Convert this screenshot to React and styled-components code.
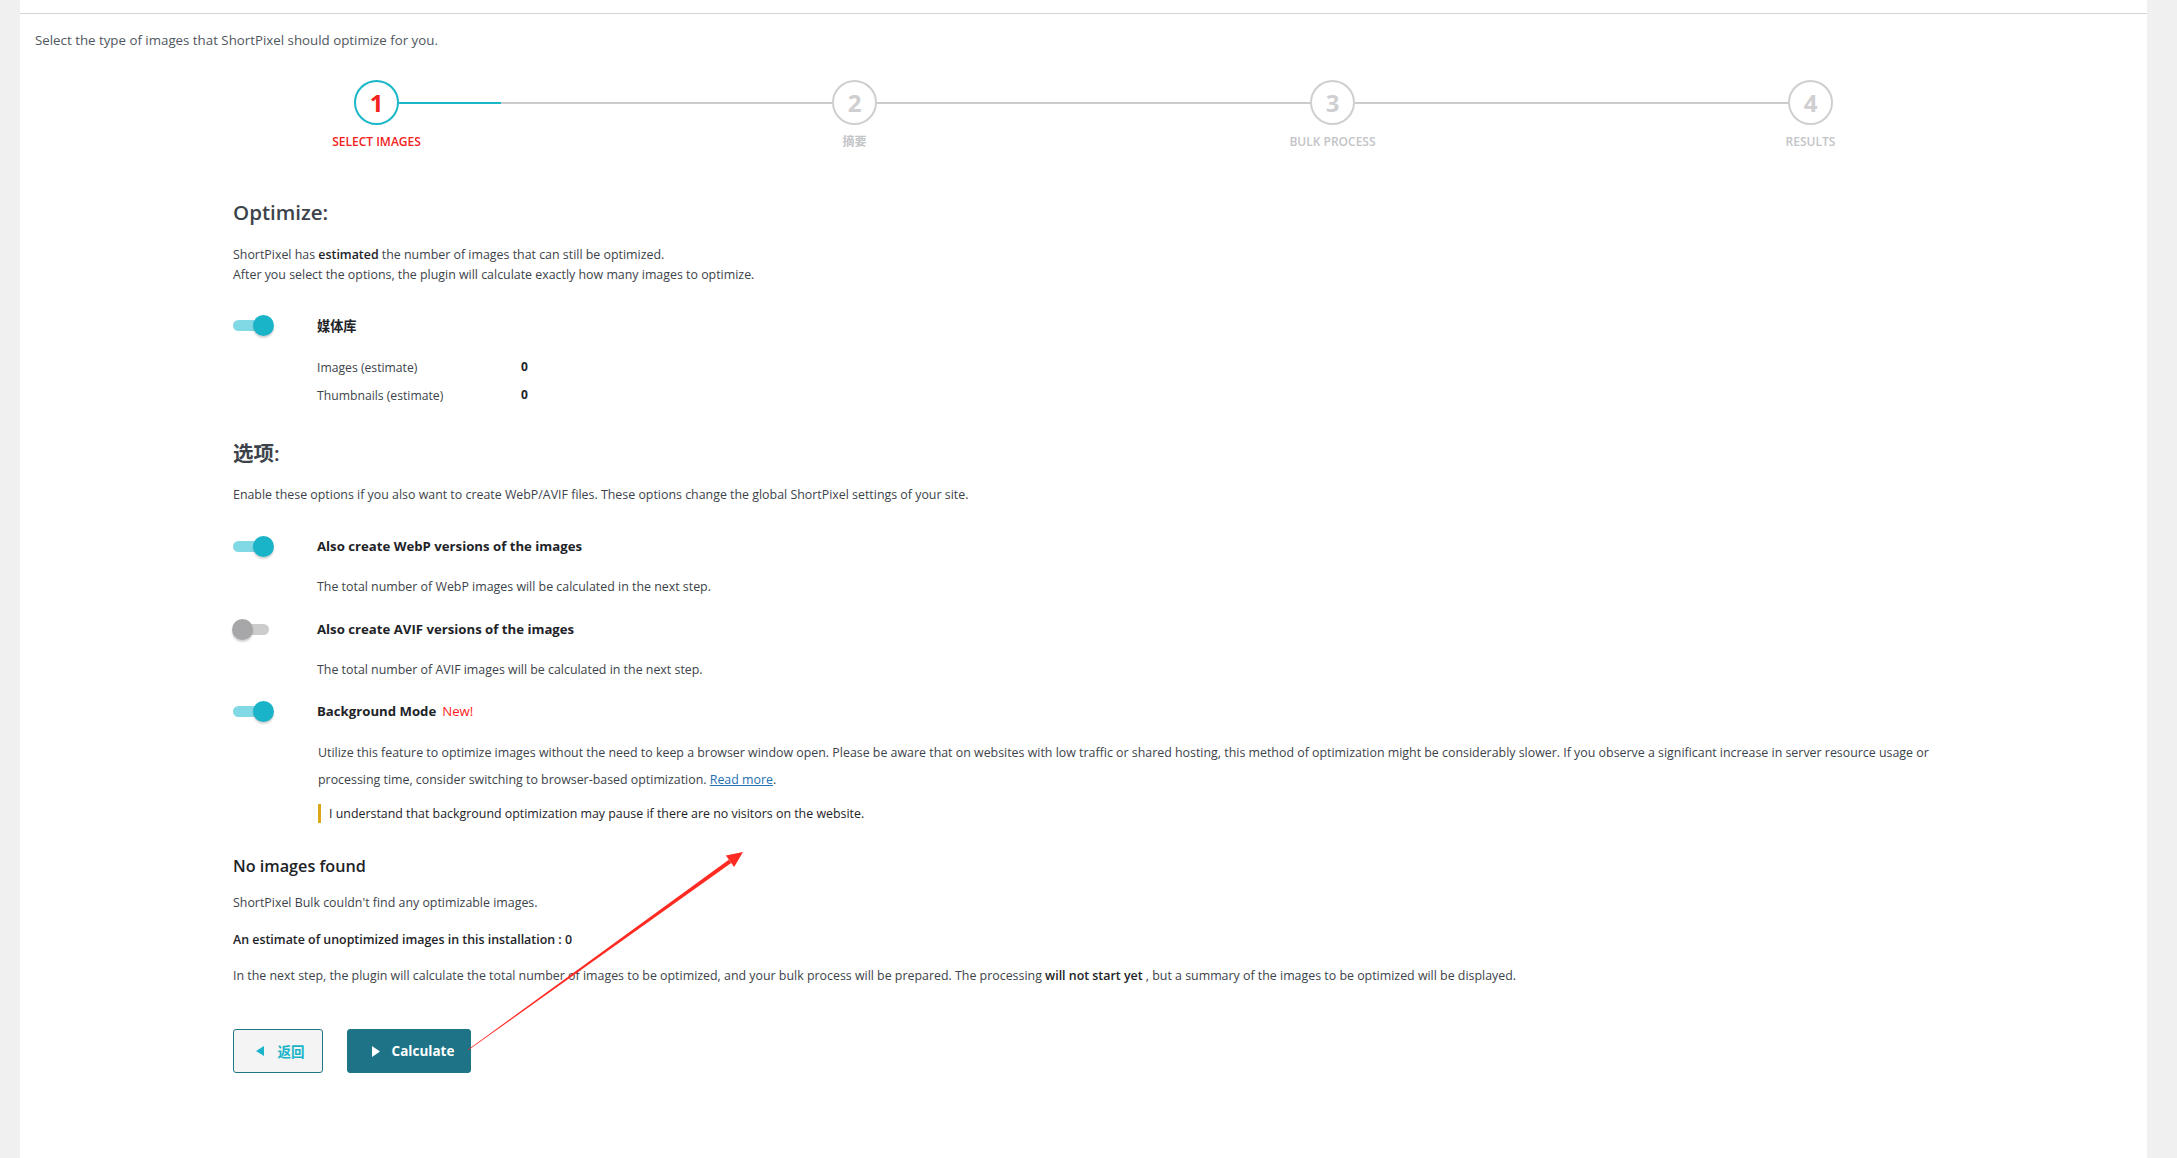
import React from 'react'
import styled, { createGlobalStyle } from 'styled-components'

const GlobalStyle = createGlobalStyle`
  html, body {
    margin: 0;
    padding: 0;
    background: #f0f0f1;
    overflow: hidden;
  }
  body {
    font-family: "Open Sans", "Noto Sans CJK SC", sans-serif;
    color: #3c434a;
  }
  * {
    box-sizing: border-box;
  }
`

const Page = styled.div`
  display: flex;
  padding: 0 30px 0 20px;
  min-height: 1158px;
`

const Panel = styled.div`
  position: relative;
  flex: 1;
  background: #ffffff;
`

const TopRule = styled.div`
  height: 14px;
  border-bottom: 1px solid #d4d4d6;
`

const Intro = styled.p`
  margin: 17px 0 0 15px;
  font-size: 13.3px;
  line-height: 18px;
  color: #50575e;
`

const Stepper = styled.div`
  display: flex;
  align-items: flex-start;
  width: 1479px;
  margin: 31px 0 0 334px;
`

const Step = styled.div`
  width: 45px;
  display: flex;
  flex-direction: column;
  align-items: center;
`

const Circle = styled.div`
  width: 45px;
  height: 45px;
  border-radius: 50%;
  border: 2px solid ${p => (p.$active ? '#1ab7c9' : '#cfcfd1')};
  display: flex;
  align-items: center;
  justify-content: center;
  font-size: 24px;
  font-weight: 700;
  color: ${p => (p.$active ? '#f2221c' : '#cfcfd1')};
`

const StepLabel = styled.div`
  margin-top: 10px;
  white-space: nowrap;
  font-size: 12px;
  line-height: 14px;
  font-weight: 600;
  text-transform: uppercase;
  color: ${p => (p.$active ? '#f2221c' : '#c3c4c7')};
`

const Connector = styled.div`
  flex: 1;
  height: 2px;
  margin-top: 22px;
  background: #cccccc;
  display: flex;
`

const ConnectorFill = styled.div`
  width: ${p => p.$width}px;
  background: #1ab7c9;
`

const Content = styled.div`
  width: 1720px;
  margin-left: 213px;
  display: flex;
  flex-direction: column;
`

const SectionTitle = styled.h2`
  margin: ${p => p.$top}px 0 0;
  font-size: 20.5px;
  line-height: 26px;
  font-weight: 600;
  color: #3c434a;
`

const Text = styled.p`
  margin: ${p => p.$top || 0}px 0 0 ${p => p.$indent || 0}px;
  font-size: 12.4px;
  line-height: ${p => p.$lh || 20}px;
  font-weight: ${p => (p.$strong ? 600 : 400)};
  color: ${p => (p.$strong ? '#1d2327' : '#3c434a')};

  & b {
    font-weight: 600;
    color: #1d2327;
  }
`

const Link = styled.a`
  color: #2271b1;
  text-decoration: underline;
`

const OptionRow = styled.div`
  display: flex;
  align-items: center;
  height: 22px;
  margin-top: ${p => p.$top}px;
`

const SwitchBox = styled.div`
  width: 84px;
  flex-shrink: 0;
`

const Switch = styled.div`
  position: relative;
  width: 41px;
  height: 21px;
`

const Track = styled.div`
  position: absolute;
  left: 0;
  top: 5px;
  width: 36px;
  height: 11px;
  border-radius: 6px;
  background: ${p => (p.$on ? '#80d9e5' : '#cccccc')};
`

const Knob = styled.div`
  position: absolute;
  top: 0;
  left: ${p => (p.$on ? '20px' : '-1px')};
  width: 21px;
  height: 21px;
  border-radius: 50%;
  background: ${p => (p.$on ? '#1ab4c9' : '#a7a7a9')};
  box-shadow: 0 2px 2px rgba(0, 0, 0, 0.18);
`

const OptionLabel = styled.span`
  font-size: 13.2px;
  font-weight: 700;
  color: #1d2327;
`

const NewTag = styled.span`
  margin-left: 6px;
  font-weight: 400;
  color: #ff1c1c;
`

const Counts = styled.div`
  display: grid;
  grid-template-columns: 204px auto;
  grid-auto-rows: 28px;
  align-items: center;
  margin: 16px 0 0 84px;
`

const CountLabel = styled.span`
  font-size: 12.2px;
  color: #3c434a;
  padding-top: 2px;
`

const CountValue = styled.span`
  font-size: 12px;
  font-weight: 700;
  color: #1d2327;
`

const Notice = styled.div`
  margin: 11px 0 0 85px;
  height: 19px;
  border-left: 3px solid #dba617;
  padding-left: 8px;
  display: flex;
  align-items: center;
  font-size: 12.4px;
  color: #1d2327;
`

const SubTitle = styled.h3`
  margin: 32px 0 0;
  font-size: 16.2px;
  line-height: 22px;
  font-weight: 600;
  color: #1d2327;
`

const Actions = styled.div`
  display: flex;
  gap: 24px;
  margin-top: 43px;
`

const Button = styled.button`
  height: 44px;
  width: ${p => p.$width}px;
  border-radius: 3px;
  border: 1px solid #1d7587;
  background: ${p => (p.$primary ? '#1e7486' : '#f4f4f4')};
  color: ${p => (p.$primary ? '#ffffff' : '#1ab4c9')};
  display: flex;
  align-items: center;
  justify-content: center;
  gap: ${p => (p.$primary ? 12 : 14)}px;
  font-family: "Open Sans", "Noto Sans CJK SC", sans-serif;
  font-size: 13.5px;
  font-weight: 700;
  cursor: pointer;
  padding: 0 0 0 ${p => (p.$primary ? 8 : 4)}px;
`

const Arrow = styled.svg`
  position: absolute;
  left: 0;
  top: 0;
  width: 100%;
  height: 100%;
  pointer-events: none;
`

const steps = [
  { n: 1, label: 'Select Images', active: true },
  { n: 2, label: '摘要' },
  { n: 3, label: 'Bulk Process' },
  { n: 4, label: 'Results' },
]

const Toggle = ({ on }) => (
  <SwitchBox>
    <Switch>
      <Track $on={on} />
      <Knob $on={on} />
    </Switch>
  </SwitchBox>
)

export default function App() {
  return (
    <>
      <GlobalStyle />
      <Page>
        <Panel>
          <TopRule />
          <Intro>Select the type of images that ShortPixel should optimize for you.</Intro>

          <Stepper>
            {steps.map((s, i) => (
              <React.Fragment key={s.n}>
                <Step>
                  <Circle $active={s.active}>{s.n}</Circle>
                  <StepLabel $active={s.active}>{s.label}</StepLabel>
                </Step>
                {i < steps.length - 1 && (
                  <Connector>
                    <ConnectorFill $width={i === 0 ? 102 : 0} />
                  </Connector>
                )}
              </React.Fragment>
            ))}
          </Stepper>

          <Content>
            <SectionTitle $top={50}>Optimize:</SectionTitle>
            <Text $top={20}>
              ShortPixel has <b>estimated</b> the number of images that can still be optimized.
              <br />
              After you select the options, the plugin will calculate exactly how many images to optimize.
            </Text>

            <OptionRow $top={29}>
              <Toggle on />
              <OptionLabel>媒体库</OptionLabel>
            </OptionRow>
            <Counts>
              <CountLabel>Images (estimate)</CountLabel>
              <CountValue>0</CountValue>
              <CountLabel>Thumbnails (estimate)</CountLabel>
              <CountValue>0</CountValue>
            </Counts>

            <SectionTitle $top={32}>选项:</SectionTitle>
            <Text $top={19}>
              Enable these options if you also want to create WebP/AVIF files. These options change the global ShortPixel settings of your site.
            </Text>

            <OptionRow $top={30}>
              <Toggle on />
              <OptionLabel>Also create WebP versions of the images</OptionLabel>
            </OptionRow>
            <Text $top={20} $indent={84}>
              The total number of WebP images will be calculated in the next step.
            </Text>

            <OptionRow $top={21}>
              <Toggle />
              <OptionLabel>Also create AVIF versions of the images</OptionLabel>
            </OptionRow>
            <Text $top={20} $indent={84}>
              The total number of AVIF images will be calculated in the next step.
            </Text>

            <OptionRow $top={20}>
              <Toggle on />
              <OptionLabel>
                Background Mode<NewTag>New!</NewTag>
              </OptionLabel>
            </OptionRow>
            <Text $top={17} $indent={85} $lh={27}>
              Utilize this feature to optimize images without the need to keep a browser window open. Please be aware that on websites with low traffic or shared hosting, this method of optimization might be considerably slower. If you observe a significant increase in server resource usage or processing time, consider switching to browser-based optimization. <Link href="#">Read more</Link>.
            </Text>
            <Notice>I understand that background optimization may pause if there are no visitors on the website.</Notice>

            <SubTitle>No images found</SubTitle>
            <Text $top={16}>ShortPixel Bulk couldn't find any optimizable images.</Text>
            <Text $top={17} $strong>An estimate of unoptimized images in this installation : 0</Text>
            <Text $top={16}>
              In the next step, the plugin will calculate the total number of images to be optimized, and your bulk process will be prepared. The processing <b>will not start yet</b> , but a summary of the images to be optimized will be displayed.
            </Text>

            <Actions>
              <Button $width={90}>
                <svg width="8" height="10" viewBox="0 0 8 10">
                  <polygon points="8,0 8,10 0,5" fill="#1ab4c9" />
                </svg>
                返回
              </Button>
              <Button $primary $width={124}>
                <svg width="8" height="11" viewBox="0 0 8 11">
                  <polygon points="0,0 8,5.5 0,11" fill="#ffffff" />
                </svg>
                Calculate
              </Button>
            </Actions>
          </Content>

          <Arrow viewBox="0 0 2127 1158" preserveAspectRatio="none">
            <polygon
              points="448.2,1050.3 447.8,1049.7 708.8,859.7 711.2,862.9"
              fill="#ff2a22"
            />
            <polygon points="723,852 714.1,867 705.9,855.6" fill="#ff2a22" />
          </Arrow>
        </Panel>
      </Page>
    </>
  )
}
